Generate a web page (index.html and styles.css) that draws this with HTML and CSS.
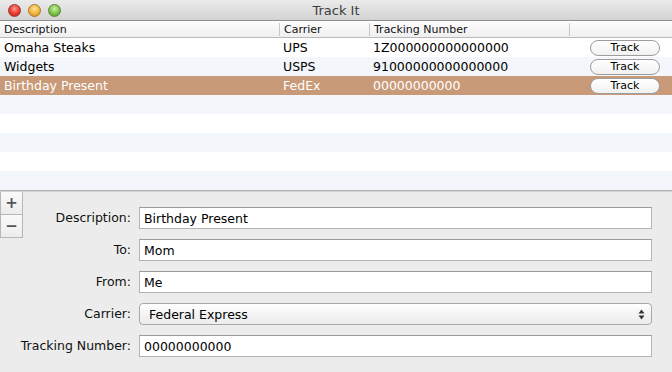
FILE: index.html
```html
<!DOCTYPE html>
<html lang="en">
<head>
  <meta charset="UTF-8" />
  <title>Track It</title>
  <link rel="stylesheet" href="styles.css">
</head>
<body>
  <div class="window">
    <div class="titlebar">
      <div class="lights">
        <span class="light red"></span>
        <span class="light yellow"></span>
        <span class="light green"></span>
      </div>
      <div class="title">Track It</div>
    </div>

    <div class="table">
      <div class="row head">
        <div class="cell">Description</div>
        <div class="cell">Carrier</div>
        <div class="cell">Tracking Number</div>
        <div class="cell"></div>
      </div>
      <div class="row">
        <div class="cell">Omaha Steaks</div>
        <div class="cell">UPS</div>
        <div class="cell">1Z000000000000000</div>
        <div class="cell action"><button class="track-btn">Track</button></div>
      </div>
      <div class="row stripe">
        <div class="cell">Widgets</div>
        <div class="cell">USPS</div>
        <div class="cell">91000000000000000</div>
        <div class="cell action"><button class="track-btn">Track</button></div>
      </div>
      <div class="row selected">
        <div class="cell">Birthday Present</div>
        <div class="cell">FedEx</div>
        <div class="cell">00000000000</div>
        <div class="cell action"><button class="track-btn">Track</button></div>
      </div>
      <div class="row stripe empty"></div>
      <div class="row empty"></div>
      <div class="row stripe empty"></div>
      <div class="row empty"></div>
      <div class="row stripe empty"></div>
    </div>

    <div class="panel">
      <div class="add-remove">
        <button class="sq-btn">+</button>
        <button class="sq-btn">&minus;</button>
      </div>
      <div class="form">
        <label>Description:</label>
        <input type="text" value="Birthday Present" />
        <label>To:</label>
        <input type="text" value="Mom" />
        <label>From:</label>
        <input type="text" value="Me" />
        <label>Carrier:</label>
        <div class="popup">
          <span>Federal Express</span>
          <svg class="arrows" width="7" height="11" viewBox="0 0 7 11">
            <path d="M3.5 0.5 L6.5 4.5 L0.5 4.5 Z" fill="#333"/>
            <path d="M3.5 10.5 L6.5 6.5 L0.5 6.5 Z" fill="#333"/>
          </svg>
        </div>
        <label>Tracking Number:</label>
        <input type="text" value="00000000000" />
      </div>
    </div>
  </div>
</body>
</html>
```

FILE: styles.css
```css
html, body {
  margin: 0;
  padding: 0;
  background: #ececec;
}

body {
  font-family: "DejaVu Sans", "Liberation Sans", sans-serif;
  color: #000;
}

.window {
  width: 672px;
  height: 372px;
  display: flex;
  flex-direction: column;
  overflow: hidden;
  background: #ececec;
}

.titlebar {
  height: 21px;
  flex: none;
  display: flex;
  align-items: center;
  background: linear-gradient(#ebebeb, #d3d3d3);
  border-bottom: 1px solid #8f8f8f;
  box-sizing: border-box;
  position: relative;
}

.lights {
  display: flex;
  gap: 7px;
  padding-left: 8px;
}

.light {
  width: 13px;
  height: 13px;
  border-radius: 50%;
  box-sizing: border-box;
}

.red {
  background: radial-gradient(circle at 50% 35%, #ff9a92 0%, #e8392f 55%, #b3221b 100%);
  border: 1px solid #a3332c;
}

.yellow {
  background: radial-gradient(circle at 50% 35%, #ffe49a 0%, #f1b33a 55%, #c98519 100%);
  border: 1px solid #a87a24;
}

.green {
  background: radial-gradient(circle at 50% 35%, #c8f2a0 0%, #7ec04a 55%, #4a8d25 100%);
  border: 1px solid #54872f;
}

.title {
  position: absolute;
  left: 0;
  right: 0;
  text-align: center;
  font-size: 13px;
  color: #3c3c3c;
  pointer-events: none;
}

.table {
  flex: none;
  background: #fff;
  border-bottom: 1px solid #b0b0b0;
}

.row {
  display: grid;
  grid-template-columns: 279px 90px 200px 1fr;
  height: 19px;
  align-items: center;
  font-size: 12.5px;
}

.row.head {
  height: 16px;
  font-size: 11px;
  background: linear-gradient(#fdfdfd, #efefef);
  border-bottom: 1px solid #b9b9b9;
  color: #111;
}

.row.head .cell + .cell {
  border-left: 1px solid #c8c8c8;
  height: 13px;
  line-height: 13px;
}

.cell {
  padding-left: 4px;
  white-space: nowrap;
  overflow: hidden;
}

.stripe {
  background: #f3f6fa;
}

.selected {
  background: #c99a78;
  color: #fff;
}

.action {
  display: flex;
  justify-content: flex-end;
  padding-right: 12px;
}

.track-btn {
  width: 70px;
  height: 16px;
  padding: 0;
  border: 1px solid #9d9d9d;
  border-radius: 8px;
  background: linear-gradient(#ffffff, #f1f1f1);
  font-family: inherit;
  font-size: 11px;
  color: #000;
  line-height: 14px;
}

.panel {
  flex: 1;
  display: flex;
  border-top: 1px solid #d4d4d4;
}

.add-remove {
  width: 18px;
  flex: none;
  display: flex;
  flex-direction: column;
}

.sq-btn {
  width: 23px;
  height: 23px;
  flex: none;
  padding: 0;
  margin: 0;
  border: 1px solid #b6b6b6;
  border-top: none;
  background: linear-gradient(#fafafa, #ececec);
  font-family: inherit;
  font-size: 15px;
  font-weight: bold;
  color: #555;
  line-height: 20px;
}

.form {
  flex: 1;
  display: grid;
  grid-template-columns: 113px 1fr;
  column-gap: 8px;
  row-gap: 10px;
  align-content: start;
  padding: 15px 20px 0 0;
}

.form label {
  text-align: right;
  font-size: 12.5px;
  line-height: 22px;
  color: #111;
  white-space: nowrap;
}

.form input {
  height: 22px;
  box-sizing: border-box;
  margin: 0;
  border: 1px solid #b4b4b4;
  border-top-color: #9a9a9a;
  background: #fff;
  font-family: inherit;
  font-size: 12.5px;
  padding: 0 4px;
  color: #000;
}

.popup {
  height: 22px;
  box-sizing: border-box;
  border: 1px solid #a9a9a9;
  border-radius: 4px;
  background: linear-gradient(#ffffff, #f4f4f4 50%, #ececec);
  display: flex;
  align-items: center;
  justify-content: space-between;
  padding: 0 6px 0 9px;
  font-size: 12.5px;
}
```
